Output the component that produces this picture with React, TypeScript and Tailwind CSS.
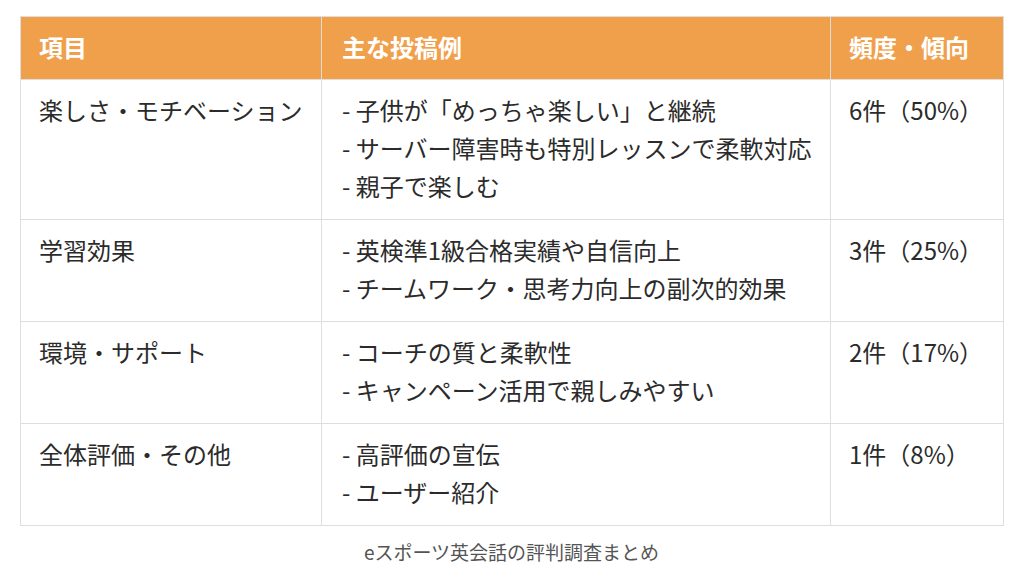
import React from 'react';

type Row = {
  item: string;
  examples: string[];
  freq: string;
};

const rows: Row[] = [
  {
    item: '楽しさ・モチベーション',
    examples: ['子供が「めっちゃ楽しい」と継続', 'サーバー障害時も特別レッスンで柔軟対応', '親子で楽しむ'],
    freq: '6件（50%）',
  },
  {
    item: '学習効果',
    examples: ['英検準1級合格実績や自信向上', 'チームワーク・思考力向上の副次的効果'],
    freq: '3件（25%）',
  },
  {
    item: '環境・サポート',
    examples: ['コーチの質と柔軟性', 'キャンペーン活用で親しみやすい'],
    freq: '2件（17%）',
  },
  {
    item: '全体評価・その他',
    examples: ['高評価の宣伝', 'ユーザー紹介'],
    freq: '1件（8%）',
  },
];

const App: React.FC = () => {
  return (
    <div className="min-h-screen bg-white pt-4 px-5 font-['Noto_Sans_CJK_JP','Noto_Sans',sans-serif] text-[#2b2b2b]">
      <table className="w-[983px] border-collapse table-fixed">
        <colgroup>
          <col className="w-[301px]" />
          <col className="w-[509px]" />
          <col className="w-[173px]" />
        </colgroup>
        <thead>
          <tr className="bg-[#f09f4b] text-white">
            <th className="border border-[#dedede] h-[63px] px-[18px] pb-[2px] text-left text-[24px] font-bold leading-[38px]">項目</th>
            <th className="border border-[#dedede] px-5 pb-[2px] text-left text-[24px] font-bold leading-[38px]">主な投稿例</th>
            <th className="border border-[#dedede] px-[18px] pb-[2px] text-left text-[24px] font-bold leading-[38px]">頻度・傾向</th>
          </tr>
        </thead>
        <tbody>
          {rows.map((row) => (
            <tr key={row.item} className="text-[24px] leading-[38px] align-top">
              <td className="border border-[#dedede] px-[18px] pt-[11px] pb-[14px] whitespace-nowrap">{row.item}</td>
              <td className="border border-[#dedede] pl-5 pr-2 pt-[11px] pb-[14px]">
                {row.examples.map((ex) => (
                  <div key={ex} className="whitespace-nowrap">- {ex}</div>
                ))}
              </td>
              <td className="border border-[#dedede] px-[18px] pt-[11px] pb-[14px] whitespace-nowrap">{row.freq}</td>
            </tr>
          ))}
        </tbody>
      </table>
      <p className="w-[983px] text-center text-[19px] text-[#555] mt-[12px]">eスポーツ英会話の評判調査まとめ</p>
    </div>
  );
};

export default App;
